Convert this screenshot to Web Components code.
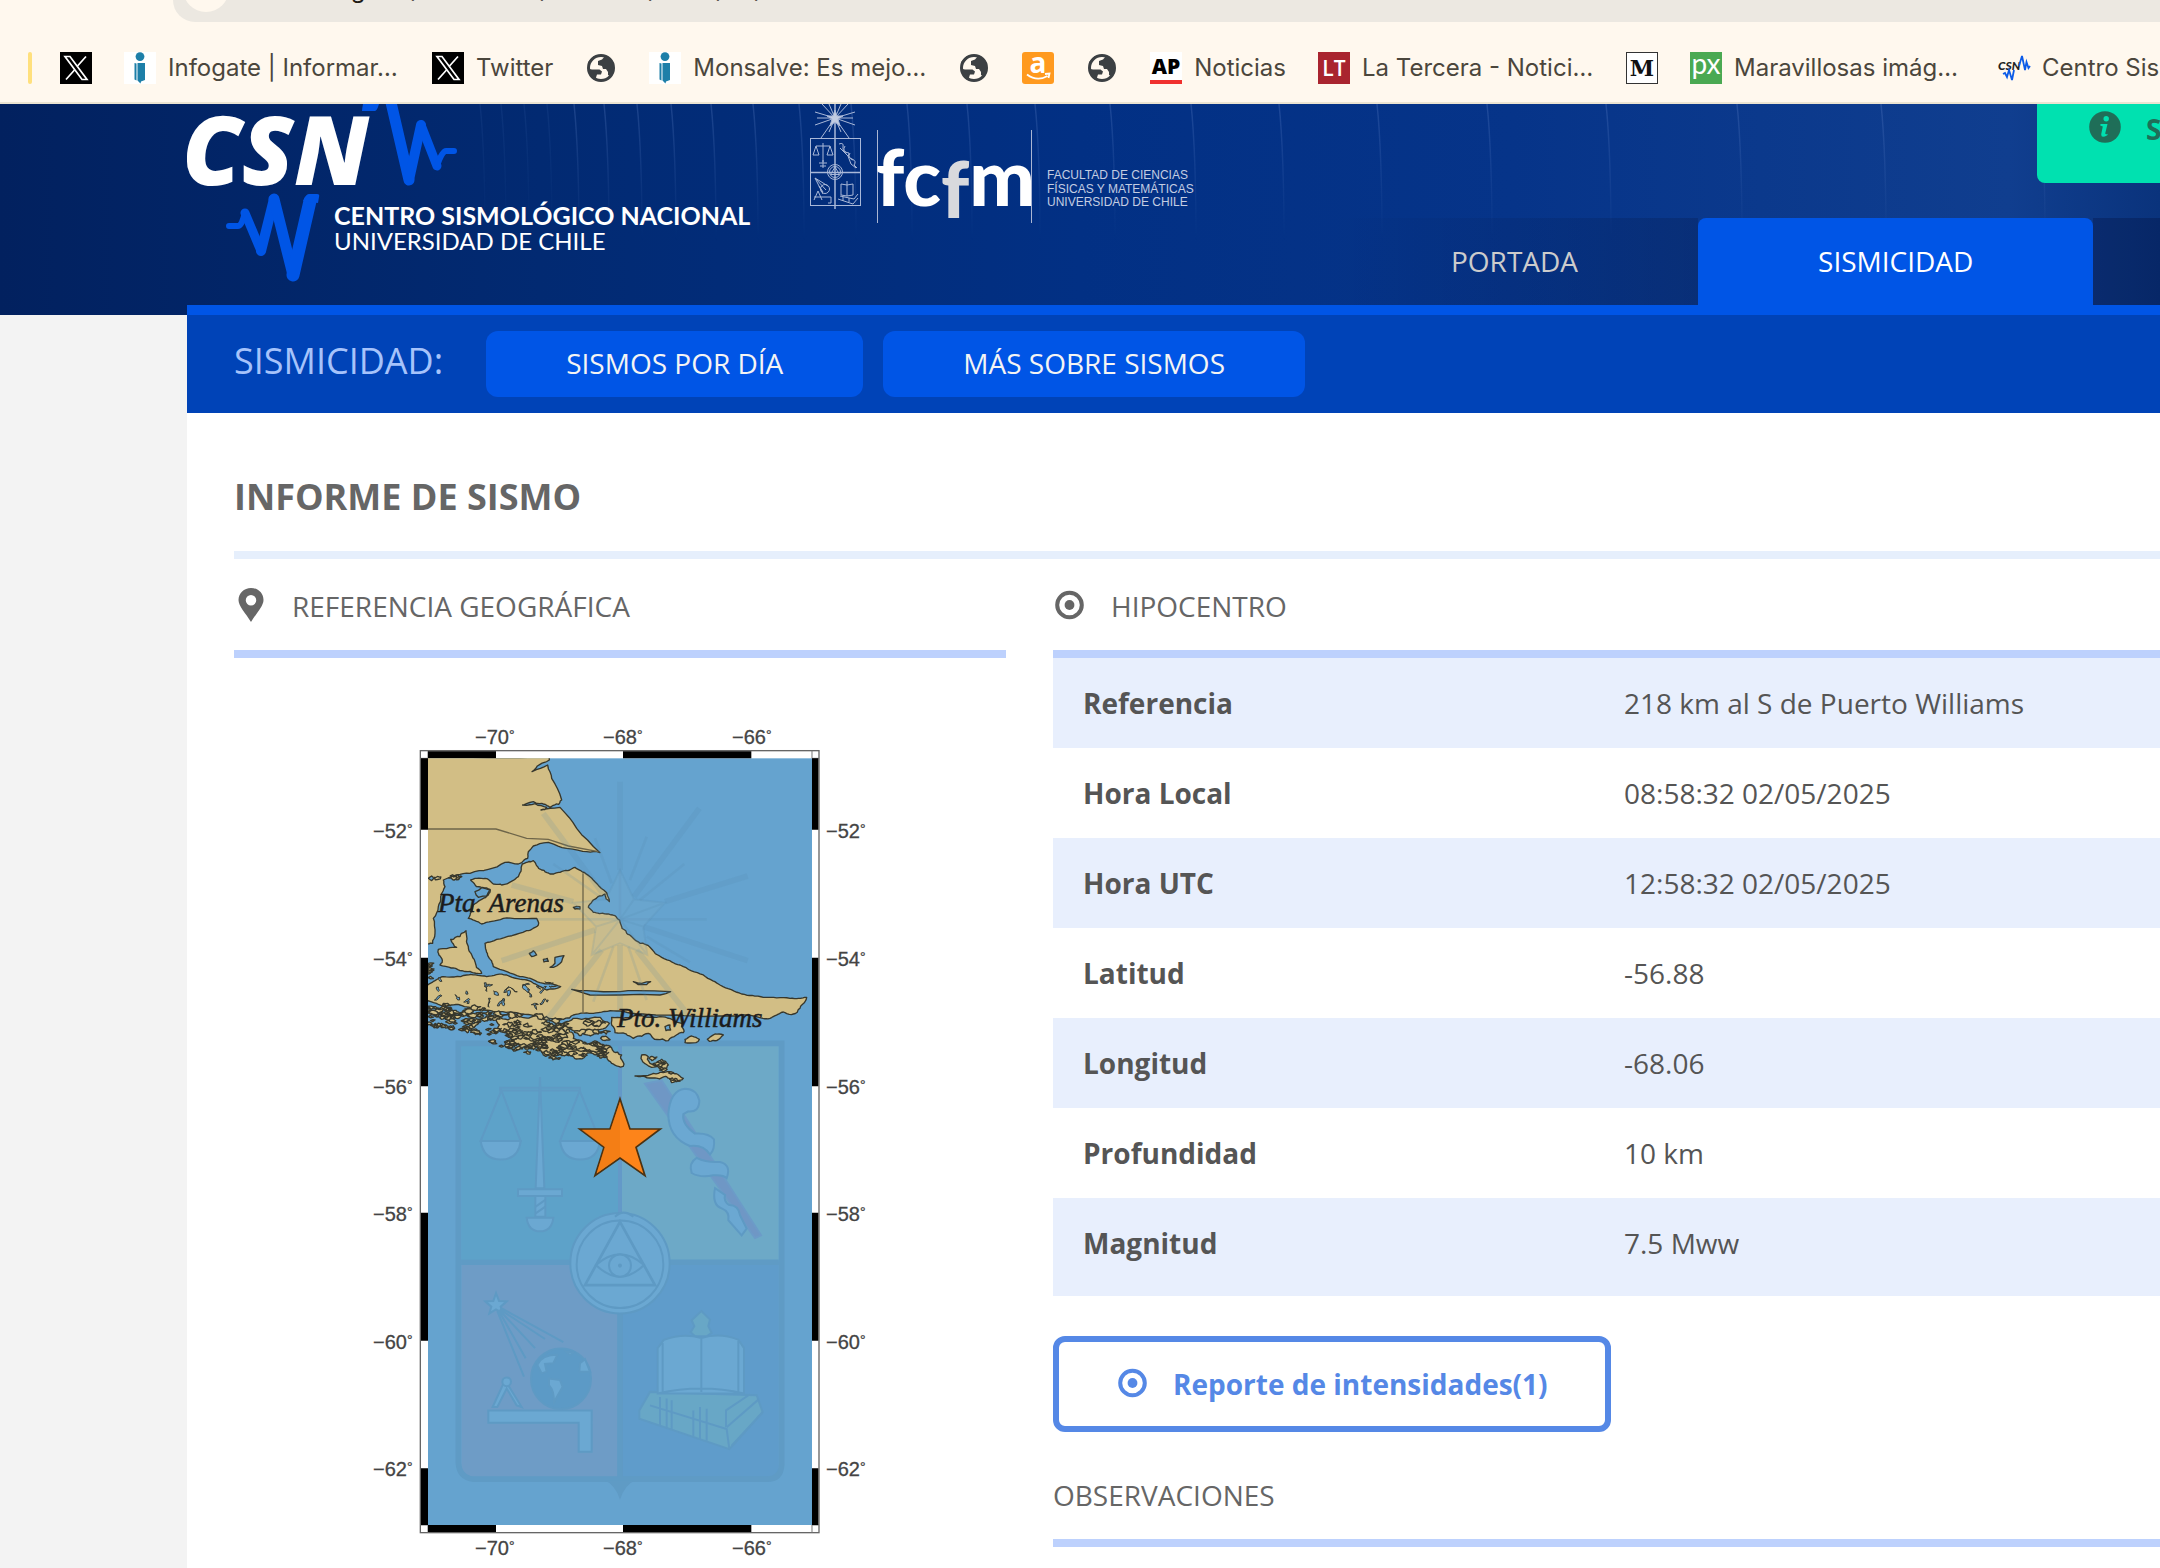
<!DOCTYPE html>
<html lang="es">
<head>
<meta charset="utf-8">
<title>Informe de sismo</title>
<style>
  html, body { margin: 0; }
  body { display: flex; flex-direction: column; min-height: 100vh; background: #f3f3f3; font-family: "Open Sans", sans-serif; font-size: 28px; line-height: 40px; color: #555; overflow-x: hidden; }
  page-panel { flex: 1; }
</style>
</head>
<body>
<browser-bar></browser-bar>
<site-header></site-header>
<page-panel>
  <sub-nav slot="nav" label="SISMICIDAD:">
    <pill-link>SISMOS POR DÍA</pill-link>
    <pill-link>MÁS SOBRE SISMOS</pill-link>
  </sub-nav>
  <span slot="title">INFORME DE SISMO</span>
  <section-heading slot="left" icon="pin">REFERENCIA GEOGRÁFICA</section-heading>
  <quake-map slot="left"></quake-map>
  <section-heading slot="right" icon="target">HIPOCENTRO</section-heading>
  <quake-data slot="right"></quake-data>
  <report-link slot="right">Reporte de intensidades(1)</report-link>
  <section-heading slot="right">OBSERVACIONES</section-heading>
</page-panel>

<script>
const define = (name, html, setup) => {
  const tpl = document.createElement('template');
  tpl.innerHTML = html;
  customElements.define(name, class extends HTMLElement {
    static observedAttributes = ['name'];
    connectedCallback() {
      if (this.shadowRoot) return;
      this.attachShadow({ mode: 'open' }).append(tpl.content.cloneNode(true));
      if (setup) setup(this, this.shadowRoot);
    }
    attributeChangedCallback() {
      if (this.shadowRoot && setup) setup(this, this.shadowRoot);
    }
  });
};

/* ---------- icons ---------- */
const person = '<rect width="32" height="32" fill="#fff"/><circle cx="16" cy="4.6" r="4.4" fill="#1d7fa8"/><path d="M10.5 11l2 .5v17l-2-1zM13.5 11h7.5v17l-4 1.5-.5 2-3-3z" fill="#1d7fa8"/>';
const icons = {
  x: '<rect width="32" height="32"/><path d="M26 4.500L17.500 14M14.500 18L6 27.500" fill="none" stroke="#fff" stroke-width="1.700"/><path d="M5 4.500h5l17 23h-5z" fill="#000" stroke="#fff" stroke-width="1.700"/>',
  info: person,
  globe: '<circle cx="16" cy="16" r="12.500" fill="#fff8ee" stroke="#3c4043" stroke-width="3"/><path d="M17 3C9 3 3.500 9 3.500 16c1 1 3 1.500 5 1.500h6l2.500 2-1 3h-4l-1 3 2 3.500-5-2-5-7V10l6-6zM20 4l-3 3.500-4 1.500v4l4 1 1 3h3l2 3v3l3 1.500c4-4 4-12 1-16z" fill="#3c4043"/>',
  amazon: '<rect width="32" height="32" rx="3" fill="#ff9a1f"/><text x="16" y="21" text-anchor="middle" font-family="Open Sans" font-weight="700" font-size="28" fill="#fff">a</text><path d="M5 22.500q10 7.500 20.500 1.500M23 22l4.500-.5-1 4.500" fill="none" stroke="#fff" stroke-width="1.800"/>',
  ap: '<rect width="32" height="32" fill="#fff"/><text x="16" y="22" text-anchor="middle" font-family="Open Sans" font-weight="800" font-size="21" fill="#000">AP</text><rect y="28" width="32" height="4" fill="#f0302e"/>',
  lt: '<rect width="32" height="32" fill="#a9242f"/><text x="16" y="24" text-anchor="middle" font-family="Open Sans" font-weight="600" font-size="21" fill="#fff">LT</text>',
  m: '<rect x=".5" y=".5" width="31" height="31" fill="#fff" stroke="#333"/><text x="16" y="24" text-anchor="middle" font-family="DejaVu Serif" font-weight="700" font-size="22" fill="#111">M</text>',
  px: '<rect width="32" height="32" fill="#4aa952"/><text x="16" y="22" text-anchor="middle" font-family="Lato" font-weight="400" font-size="28" fill="#fff">px</text>',
  csn: '<text x="0" y="18" font-family="Lato" font-style="italic" font-weight="900" font-size="12" fill="#222">CSN</text><path d="M21 14l3-10 3 14 1.500-8 2 6 1.500-2M5 22l2-1 2 4 2-7 3 10 2-10" fill="none" stroke="#0b5be8" stroke-width="1.800"/>',
  pin: '<path fill-rule="evenodd" d="M17 -2C10 -2 4.500 3 4.500 10c0 6 7 13 12.500 22 5.500-9 12.500-16 12.500-22C29.500 3 24 -2 17 -2zM17 5a5.200 5.200 0 1 1 0 10.500A5.200 5.200 0 0 1 17 5z" fill="currentColor"/>',
  target: '<circle cx="16.500" cy="15" r="12.300" fill="none" stroke="currentColor" stroke-width="4"/><circle cx="16.500" cy="15" r="4.900" fill="currentColor"/>',
  i: '<circle cx="16" cy="16" r="15.800" fill="#1f6e58"/><circle cx="17.200" cy="7.800" r="2.700" fill="#00e1b0"/><path d="M11.500 13h7l-2.300 9.500q.5 1.500 2.500.2l-.4 1.600q-6.300 3.500-6.100-1l1.600-7.800-2.600-1z" fill="#00e1b0"/>'
};
define('app-icon', `<style>:host{display:block;flex:none;width:32px;height:32px}svg{display:block;width:100%;height:100%;overflow:visible}</style><svg viewBox="0 0 32 32" aria-hidden="true"></svg>`,
  (el, r) => { r.querySelector('svg').innerHTML = icons[el.getAttribute('name')] || ''; });

/* ---------- browser chrome ---------- */
define('book-mark', `<style>
  :host{display:block;flex:none}
  a{display:flex;align-items:center;gap:12px;color:#4b463c;text-decoration:none;white-space:nowrap}
  .label{display:block}
  :host([elided]) .label{min-width:232px}
  :host([bare]) .label{display:none}
</style><a href="#"><app-icon></app-icon><span class="label"><slot></slot></span></a>`,
  (el, r) => r.querySelector('app-icon').setAttribute('name', el.getAttribute('icon')));

define('browser-bar', `<style>
  :host{display:block;background:#fff8ee;border-bottom:2px solid #ebe4d2;overflow:hidden;font-family:Inter,sans-serif}
  .omni{display:flex;align-items:flex-end;gap:35px;height:22px;margin-left:173px;background:#ece8e1;border-radius:0 0 0 36px}
  .chip{flex:none;width:46px;height:46px;margin:0 0 10px 10px;border-radius:50%;background:#fff8ee}
  .url{font-size:24px;line-height:32px;margin-bottom:16px;color:#5b564e;white-space:nowrap}
  .url b{font-weight:400;color:#1f1b16}
  nav{display:flex;align-items:center;gap:32px;height:80px;padding:11px 0 0 28px;font-size:24px;line-height:32px;box-sizing:border-box}
  .sep{flex:none;width:4px;height:32px;border-radius:2px;background:#ffe07d;margin-right:-4px}
</style>
<div class="omni"><span class="chip"></span><span class="url"><b>sismologia.cl</b>/sismicidad/informes/2025/05/307180.html</span></div>
<nav aria-label="Marcadores"><span class="sep"></span>
<book-mark bare icon="x"></book-mark>
<book-mark elided icon="info">Infogate | Informar…</book-mark>
<book-mark icon="x">Twitter</book-mark>
<book-mark bare icon="globe"></book-mark>
<book-mark elided icon="info">Monsalve: Es mejo…</book-mark>
<book-mark bare icon="globe"></book-mark>
<book-mark bare icon="amazon"></book-mark>
<book-mark bare icon="globe"></book-mark>
<book-mark icon="ap">Noticias</book-mark>
<book-mark elided icon="lt">La Tercera - Notici…</book-mark>
<book-mark bare icon="m"></book-mark>
<book-mark elided icon="px">Maravillosas imág…</book-mark>
<book-mark icon="csn">Centro Sis</book-mark>
</nav>`);

/* ---------- header ---------- */
define('csn-logo', `<style>:host{display:block;flex:none}svg{display:block}</style>
<svg width="580" height="201" viewBox="187 104 580 201" role="img" aria-label="Centro Sismológico Nacional">
 <g fill="none" stroke="#0055e6" stroke-linejoin="round" stroke-linecap="round">
  <path d="M390 98L409 180" stroke-width="11"/><path d="M409 180L421 125" stroke-width="10"/><path d="M421 125L437 166" stroke-width="9"/><path d="M437 166Q442 151 446 151H454" stroke-width="6"/>
  <path d="M229 226H238Q242 226 245 212" stroke-width="6"/><path d="M245 213L261 251" stroke-width="9"/><path d="M261 251L274 199" stroke-width="10"/><path d="M274 199L293 275" stroke-width="11"/><path d="M293 275L310 201" stroke-width="13"/>
 </g>
 <path d="M303 201l3-5q1-2 3-2h8q3 0 2 3l-1 6zM362 111q0-2 1-7h16q-2 7-4 7z" fill="#0055e6"/>
 <text x="182" y="185" font-family="Open Sans" font-size="95" font-weight="800" font-style="italic" fill="#fff">CSN</text>
 <g font-family="Lato" fill="#fff"><text x="334" y="225" font-size="25" font-weight="700">CENTRO SISMOLÓGICO NACIONAL</text>
 <text x="334" y="250" font-size="24">UNIVERSIDAD DE CHILE</text></g>
</svg>`);

define('fcfm-logo', `<style>:host{display:block;flex:none}svg{display:block}</style>
<svg width="400" height="201" viewBox="800 104 400 201" role="img" aria-label="Facultad de Ciencias Físicas y Matemáticas">
 <g fill="none" stroke="#a9b8d8" stroke-width="1">
  <rect x="810.500" y="138.500" width="50" height="67"/><path d="M835 104V209M810 172.500H861" stroke-width="1.500"/>
  <path d="M835 118L815 112M835 118L855 112M835 118L815 125M835 118L855 125M835 118L822 104M835 118L848 104M835 118L821 138M835 118L849 138M835 118L817 118M835 118H853M835 118L829 104M835 118L841 104M835 118L829 132M835 118L841 132"/>
  <path d="M835 110l2 6h6l-5 3 2 7-5-4-5 4 2-7-5-3h6z" fill="#c3cde2"/>
  <path d="M816 146H830M823 143V162M816 146l-3 9h6zM830 146l-3 9h6zM819 163h8M823 160v8M820 166h6"/>
  <path d="M839 144q5-2 4 3t6 6q-2 4 3 6t2 6l3 3M840 148l8 8 3 8 5 4M845 146q-3 5 2 7M850 153q-3 5 3 7"/>
  <circle cx="835" cy="172" r="7.500"/><circle cx="835" cy="172" r="5.500"/><path d="M835 167l4.500 7.500h-9zM833 172.500h4"/>
  <path d="M815 178l8 16M815 178l13 8M815 178l11 12M814 200l4-9 4 9M814 197h17v6h-3M819 186l4 6"/><circle cx="825" cy="189" r="4.500"/>
  <path d="M841 184l6 1 6-1v11l-6 1-6-1zM847 181v15M840 196l14 3 4-5M838 199l15 5 5-6M843 197v4M849 198v4"/>
 </g>
 <path d="M877.500 130V223M1031.500 130V223" stroke="#aab6d3"/>
 <text x="876" y="206" font-family="Lato" font-weight="900" font-size="78" fill="#fff">fc<tspan fill="#d8d9dd" dy="12">f</tspan><tspan dy="-12">m</tspan></text>
 <g font-family="Liberation Sans" font-size="12" fill="#c3cde2"><text x="1047" y="179">FACULTAD DE CIENCIAS</text><text x="1047" y="193">FÍSICAS Y MATEMÁTICAS</text><text x="1047" y="206">UNIVERSIDAD DE CHILE</text></g>
</svg>`);

define('site-tab', `<style>
  :host{display:block;flex:none}
  a{display:flex;align-items:center;height:87px;box-sizing:border-box;padding:0 120px 2px;background:linear-gradient(90deg,rgba(0,0,20,0),rgba(0,0,20,.16));color:#ccc;text-decoration:none;white-space:nowrap}
  :host([active]) a{background:#0055e6;color:#fff;border-radius:8px 8px 0 0}
  :host([rest]){flex:1}:host([rest]) a{background:rgba(0,0,30,.22);padding:0}
</style><a href="#"><slot></slot></a>`);

define('site-header', `<style>
  :host{display:block;position:relative;background:linear-gradient(90deg,#02215f 0,#022a72 25%,#023084 50%,#063489 70%,#103e8f 93%,#0a337c 100%);overflow:hidden}
  .waves{position:absolute;inset:0;width:100%;height:100%}
  .row{position:relative;display:flex;height:201px;margin-left:187px}
  .brand{display:flex;gap:33px;flex:1 1 0;min-width:0}
  .side{flex:none;width:829px;display:flex;flex-direction:column;justify-content:space-between}
  .tabs{display:flex}
  .badge{align-self:flex-end;box-sizing:border-box;width:123px;height:79px;overflow:hidden;display:flex;align-items:flex-start;gap:25px;padding:7px 0 0 52px;background:#00e1b0;border-radius:0 0 0 8px;color:#1f6e58;font-weight:700;line-height:36px;text-decoration:none}
  .strip{position:relative;height:10px;margin-left:187px;background:#0055e6}
</style>
<svg class="waves" viewBox="0 104 2160 211" preserveAspectRatio="none" aria-hidden="true">
 <defs><linearGradient id="f" x1="0" y1="0" x2="0" y2="1"><stop offset="0" stop-color="#fff"/><stop offset=".65" stop-color="#000"/></linearGradient><mask id="k" maskUnits="userSpaceOnUse" x="0" y="104" width="2160" height="211"><rect y="104" width="2160" height="211" fill="url(#f)"/></mask></defs>
 <g mask="url(#k)" fill="none" stroke="#6f93d6" stroke-width="1.500"></g></svg>
<div class="row"><div class="brand"><csn-logo></csn-logo><fcfm-logo></fcfm-logo></div>
<div class="side"><a class="badge" href="#"><app-icon name="i"></app-icon><span>S</span></a>
<nav class="tabs"><site-tab>PORTADA</site-tab><site-tab active>SISMICIDAD</site-tab><site-tab rest></site-tab></nav></div></div>
<div class="strip"></div>`, (el, r) => {
  r.querySelector('.waves g').innerHTML = [480,501,524,547,574,604,637,671,711,753,799,851,907,967,1035,1110,1191,1279,1377,1487,1606,1737,1881,2040]
    .map(x => `<path stroke-opacity="${x < 560 ? .1 : .24}" d="M${x} 104Q${x + 6} 160 ${x + 5} 290"/>`).join('');
});

/* ---------- content ---------- */
define('pill-link', `<style>:host{display:block;flex:none}a{display:flex;align-items:center;height:66px;box-sizing:border-box;padding:0 80px 2px;border-radius:12px;background:#0055e6;color:#f4f4f4;text-decoration:none;white-space:nowrap}</style><a href="#"><slot></slot></a>`);

define('sub-nav', `<style>
  :host{display:block;background:#0043b7}
  nav{display:flex;align-items:center;gap:20px;height:98px;padding-left:47px}
  .label{font-size:36px;line-height:48px;color:#a6c3fb;padding:0 23px 6px 0}
</style><nav><span class="label"></span><slot></slot></nav>`, (el, r) => r.querySelector('.label').textContent = el.getAttribute('label'));

define('page-panel', `<style>
  :host{display:block;margin-left:187px;background:#fff}
  h1{margin:0 0 0 47px;padding:60px 0 30px;font-size:36px;line-height:48px;font-weight:700;color:#666;border-bottom:8px solid #e6effc}
  .cols{display:grid;grid-template-columns:minmax(0,772fr) minmax(0,1107fr);gap:47px;padding-left:47px}
</style><slot name="nav"></slot><h1><slot name="title"></slot></h1><div class="cols"><div><slot name="left"></slot></div><div><slot name="right"></slot></div></div>`);

define('section-heading', `<style>
  :host{display:block}
  h2{display:flex;align-items:center;gap:26px;margin:0;padding:27px 0 24px;font-size:28px;line-height:40px;font-weight:400;color:#666;border-bottom:8px solid #bdd1fd}
</style><h2><slot></slot></h2>`, (el, r) => {
  const n = el.getAttribute('icon');
  if (n) { const i = document.createElement('app-icon'); i.setAttribute('name', n); r.querySelector('h2').prepend(i); }
});

define('quake-data', `<style>
  :host{display:block;background:#e8effd;padding-bottom:8px}
  table{width:100%;border-collapse:collapse;table-layout:fixed}
  th,td{height:90px;padding:0 0 0 30px;text-align:left;box-sizing:border-box;line-height:40px}
  th{width:541px;font-weight:700}
  tr:nth-child(even){background:#fff}
</style><table><tbody></tbody></table>`, (el, r) => {
  r.querySelector('tbody').innerHTML = [['Referencia','218 km al S de Puerto Williams'],['Hora Local','08:58:32 02/05/2025'],['Hora UTC','12:58:32 02/05/2025'],['Latitud','-56.88'],['Longitud','-68.06'],['Profundidad','10 km'],['Magnitud','7.5 Mww']]
    .map(([a, b]) => `<tr><th scope="row">${a}</th><td>${b}</td></tr>`).join('');
});

define('report-link', `<style>
  :host{display:block;padding:40px 0 16px}
  a{display:inline-flex;vertical-align:top;align-items:center;gap:25px;box-sizing:border-box;height:96px;padding:0 57px;border:6px solid #5588e6;border-radius:12px;color:#5588e6;font-weight:700;text-decoration:none}
</style><a href="#"><app-icon name="target"></app-icon><slot></slot></a>`);

/* ---------- map ---------- */
let seed = 7;
const rnd = () => (seed = (seed * 16807) % 2147483647) / 2147483647 - .5;
/* subdivides a coast line and nudges the new points */
const rough = (pts, amp, depth) => {
  for (let d = 0; d < depth; d++, amp /= 2) {
    const out = [];
    pts.forEach((p, i) => {
      const q = pts[(i + 1) % pts.length];
      out.push(p);
      const len = Math.hypot(q[0] - p[0], q[1] - p[1]);
      if (len > 9) { const k = Math.min(amp, len * .6); out.push([(p[0] + q[0]) / 2 + rnd() * k, (p[1] + q[1]) / 2 + rnd() * k]); }
    });
    pts = out;
  }
  return 'M' + pts.map(p => p.map(v => v.toFixed(1)).join(' ')).join('L') + 'Z';
};
const P = s => s.trim().split(/\s+/).map(p => p.split(',').map(Number));
const land = [
  ['204,140 570,140 568,150 540,163 516,185 563,165 575,205 605,270 596,283 570,292 550,282 520,275 488,285 525,281 560,292 543,300 600,292 650,355 720,428 680,425 620,415 565,397 520,408 505,425 503,445 475,462 435,457 385,478 330,490 290,495 250,510 255,530 242,560 235,590 220,625 225,670 218,700 190,705 190,140', 7, 2],
  ['520,452 545,480 570,492 600,487 645,472 690,500 740,548 748,575 735,552 700,570 685,592 700,607 740,612 765,617 785,650 800,670 840,700 870,712 905,742 960,765 1030,795 1080,825 1145,852 1210,862 1290,865 1340,862 1320,895 1300,912 1270,906 1230,925 1180,918 1120,918 950,915 850,912 770,903 700,910 640,915 610,928 540,920 470,908 400,905 350,900 300,885 250,890 190,870 190,830 225,812 250,800 320,795 380,800 440,795 500,810 560,840 602,830 540,818 480,800 400,770 385,740 375,700 410,688 500,662 535,645 530,625 430,625 365,642 325,625 340,585 385,555 390,538 350,530 332,510 375,505 400,522 425,525 475,500 487,462', 8, 3],
  ['318,662 325,710 345,755 365,790 300,782 240,765 245,745 235,718 290,712 272,688 300,680', 12, 3],
  ['755,922 830,915 900,920 965,940 970,968 925,992 880,985 865,970 820,985 765,968', 14, 3],
  ['410,920 460,912 540,918 560,940 620,950 640,985 700,995 750,1010 785,1035 792,1062 778,1070 740,1040 700,1025 640,1040 590,1030 550,1035 500,1010 470,1000 440,965 415,950', 32, 4],
  ['590,945 640,925 720,922 748,940 700,962 640,962', 14, 3],
  ['975,988 995,978 1018,988 1008,998 975,998', 4, 2],
  ['1042,988 1065,972 1090,975 1070,992 1048,994', 4, 2],
  ['845,1035 865,1040 870,1060 905,1048 925,1065 905,1080 870,1070 848,1055', 14, 3],
  ['825,1098 880,1090 930,1085 970,1105 935,1118 920,1100 870,1104', 12, 3]
];
const lakes = ['205,505 215,498 225,502 215,512', '345,545 365,533 390,540 380,558 355,562', '508,730 520,722 530,735 515,740', '570,772 585,760 585,742 612,737 605,755 590,768', '635,838 680,842 780,845 830,842 932,845 900,855 780,855 690,855', '820,815 845,820 872,815 860,824 835,824', '640,592 660,590 660,597 645,597', '915,950 930,945 932,960 918,962', '550,748 562,745 565,754 552,756'];
const ticks = [[359, '52'], [743, '54'], [1129, '56'], [1508, '58'], [1892, '60'], [2275, '62']];

define('quake-map', `<style>
  :host{display:flex;justify-content:center;padding-top:52px}
  svg{display:block;flex:none}
  text{font-family:"Liberation Sans",sans-serif;font-size:20px;fill:#444;stroke:#444;stroke-width:.3}
  .deg{font-size:14px}
  .place{font-family:"Liberation Serif",serif;font-style:italic;font-size:27px;fill:#1c1c1c;stroke:#1c1c1c;stroke-width:.5}
</style>
<svg width="520" height="856" viewBox="0 0 520 856" role="img" aria-label="Mapa de la zona del sismo">
 <defs><clipPath id="sea"><rect x="204" y="145" width="1152" height="2300"/></clipPath></defs>
 <g transform="scale(.33333)">
  <rect x="181" y="122" width="1196" height="2346" fill="#fff" stroke="#666" stroke-width="4"/>
  <rect x="204" y="145" width="1152" height="2300" fill="#65a3cf"/>
  <path d="M204 122V145H181M1356 122V145H1377M204 2468V2445H181M1356 2468V2445H1377" stroke="#777" stroke-width="3" fill="none"/>
  <path d="M204 124H408V145H204ZM789 124H1174V145H789ZM204 2445H408V2466H204ZM789 2445H1174V2466H789Z"/>
  <path class="side"/>
  <g transform="translate(0 990) scale(1 1.0102)">
   <g fill-opacity=".75">
    <rect x="304" y="18" width="476" height="640" fill="#5ba1c7"/><rect x="780" y="18" width="476" height="640" fill="#70abc4"/>
    <path d="M304 658H780V1300H335Q304 1295 304 1270Z" fill="#7199c3"/><path d="M780 658H1256V1270Q1256 1300 1225 1300H780Z" fill="#5d99c9"/>
   </g>
   <path d="M295 10H1265V1262Q1262 1304 1222 1304H340Q298 1300 295 1255ZM304 660H1256M780 800V1304" fill="none" stroke="#5f9bc5" stroke-width="17"/>
   <path d="M780 18V520" stroke="#6499c8" stroke-width="12"/>
   <path d="M735 1308Q765 1320 780 1365Q795 1320 825 1308Z" fill="#5f9bc5"/>
   <g stroke="#5e9ac4" stroke-width="6" fill="#6ba8d2">
    <path d="M420 142H660V150H420ZM424 150L362 300H482ZM659 150L600 300H720Z" fill="none"/>
    <path d="M362 300H482Q475 355 422 355Q370 355 362 300ZM600 300H720Q713 355 660 355Q608 355 600 300ZM540 110L553 440H527ZM474 443H606V463H474ZM526 463H556V525H526ZM500 528H580Q575 568 540 568Q505 568 500 528Z"/>
    <path d="M527 495L556 475M527 515L556 495" fill="none"/>
    <path d="M855 130L905 120L1203 580L1185 588Z" fill="#6f97c5" stroke="#6c9bc8"/>
    <path d="M985 212Q1018 215 1018 180Q1010 145 975 145Q930 150 925 220Q925 290 990 315Q1030 310 1050 340Q1065 325 1062 295Q1045 275 1005 278Q965 250 970 220ZM1010 350Q985 365 995 395Q1020 410 1060 402Q1090 400 1100 410Q1115 370 1080 362Q1040 365 1010 350ZM1065 440Q1055 490 1085 500Q1110 510 1105 535L1145 580L1160 560L1140 520Q1135 490 1108 490Q1090 480 1095 460Z"/>
    <circle cx="780" cy="663" r="149"/><circle cx="780" cy="666" r="130"/>
    <path d="M780 540L885 728H675ZM675 728H885" fill="none" stroke-width="8"/>
    <path d="M708 668Q780 605 852 668Q780 738 708 668Z"/><circle cx="780" cy="670" r="33"/><circle cx="780" cy="670" r="3"/><path d="M765 525Q790 500 820 525"/>
    <path d="M408 752L417 775L440 776L422 792L428 812L408 800L388 812L394 792L376 776L400 775Z"/>
    <path d="M412 805L492 1000M415 802L497 945M418 802L525 915M420 800L555 888M425 797L610 897" fill="none"/>
    <circle cx="603" cy="1006" r="90" fill="#5c9ac6"/>
    <path d="M532 965Q545 935 592 935L580 960L555 962L560 985L545 990ZM567 1005L600 1010L608 1030L582 1075Q582 1040 567 1025ZM660 960L675 948L690 985H658ZM618 925L640 928L630 936Z"/>
    <path d="M385 1100H695V1223H656V1137H385ZM398 1090L435 1010L485 1090L470 1085L440 1035L412 1090Z"/><circle cx="440" cy="1015" r="13"/>
    <path d="M1024 805L1050 830L1045 850L1055 870L1040 880H1005L992 868L1003 850L995 832Z" fill="#68a7c6"/>
    <path d="M838 1100L870 1045L1190 1055L1208 1105L1108 1215L838 1125Z" fill="#68a7c6"/><path d="M1195 1068L1100 1150M870 1085L1100 1155L1108 1215M1098 1150V1100L1170 1052M1208 1105L1115 1205M900 1060V1145M920 1065V1150M935 1070V1155M1000 1100V1180M1020 1090V1185M1040 1095V1190" fill="none"/>
    <path d="M893 915L912 890Q970 870 1024 885Q1080 868 1135 890L1152 915V1050H893ZM1024 885V1045M908 900V1045M1135 893V1045M893 1050Q1024 1020 1152 1050"/>
   </g>
  </g>
  <g clip-path="url(#sea)">
   <g class="land" fill="#d2be85" stroke="#37372c" stroke-width="4" stroke-linejoin="round"></g>
   <path d="M204 357H408L500 385L565 388L625 408L715 425M669 490V912" fill="none" stroke="#6e6549" stroke-width="4"/>
  </g>
  <g stroke="#4e83a8" stroke-opacity=".15" fill="none">
   <path stroke-width="17" d="M780 480V215M822 560L1018 295M915 575L1163 498M850 650L1163 752M735 560L550 310M640 575L455 525M705 660L425 752M780 705V900M830 720L985 915M725 720L560 930"/>
   <path stroke-width="8" d="M810 510L860 380M840 570L973 462M780 628H1040M860 680L990 757M755 520L705 385M720 560L580 462M780 628H530M760 710L700 875M805 710L860 870M780 628V480"/>
   <path stroke-width="6" fill="#8fb8d0" fill-opacity=".12" d="M780 480L822 568L915 578L850 650L862 735L780 700L695 735L708 650L640 578L738 568ZM780 628L822 568M780 628L915 578M780 628L850 650M780 628L862 735M780 628L695 735M780 628L708 650"/>
  </g>
  <path d="M0 -134L30 -43H121L48 12L75 97L0 44L-75 97L-48 12L-121 -43H-30Z" transform="translate(780 1300)" fill="#fd841a" stroke="#4b3212" stroke-width="5"/>
  <path d="M780 1175V1340L710 1390L734 1311L665 1260H751Z" fill="#ef7a12" fill-opacity=".6"/>
 </g>
 <g class="labels"></g>
 <text class="place" x="78" y="202">Pta. Arenas</text>
 <text class="place" x="257" y="317">Pto. Williams</text>
</svg>`, (el, r) => {
  let s = land.map(([p, a, d]) => `<path d="${rough(P(p), a, d)}"/>`).join('');
  s += lakes.map(p => `<path fill="#65a3cf" d="${rough(P(p), 4, 1)}"/>`).join('');
  /* fjords cut into the western end */
  for (let i = 0; i < 30; i++) {
    const x = 215 + (rnd() + .5) * 370, y = 812 + (rnd() + .5) * 80, a = rnd() * 40, b = rnd() * 50;
    s += `<path fill="#65a3cf" stroke-width="3" d="${rough([[x, y], [x + a, y + b], [x + a + 3, y + b + 3], [x + 6, y]], 14, 2)}"/>`;
  }
  /* archipelago: small islets in a band along the Pacific side */
  const islets = (n, x0, x1, yAt, spread, size) => {
    for (let i = 0; i < n; i++) {
      const t = rnd() + .5, x = x0 + (x1 - x0) * t, y = yAt(t) + rnd() * spread, w = size * (.5 + Math.abs(rnd()) * 1.600), h = w * .45;
      s += `<path d="${rough([[x - w, y], [x, y - h], [x + w, y + rnd() * h * 2], [x, y + h]], 18, 3)}"/>`;
    }
  };
  islets(60, 206, 360, t => 915 + t * 25, 60, 11);
  islets(24, 206, 420, t => 895 + t * 20, 30, 13);
  islets(80, 385, 600, t => 970 + t * 50, 60, 11);
  islets(36, 430, 740, t => 935 + t * 30, 55, 16);
  islets(40, 590, 740, t => 1010 + t * 10, 45, 12);
  islets(9, 204, 220, () => 780, 50, 8);
  islets(10, 870, 960, t => 1060 + t * 40, 40, 10);
  islets(5, 225, 320, () => 505, 16, 10);
  r.querySelector('.land').innerHTML = s;
  r.querySelector('.side').setAttribute('d', [[145, 359], [743, 1129], [1508, 1892], [2275, 2445]].map(([a, b]) => `M183 ${a}H204V${b}H183ZM1356 ${a}H1375V${b}H1356Z`).join(''));
  const lab = (x, y, t) => `<text x="${x}" y="${y}">−${t}<tspan class="deg" dy="-4">°</tspan></text>`;
  r.querySelector('.labels').innerHTML =
    [[115, '70'], [243, '68'], [372, '66']].map(([x, t]) => lab(x, 34, t) + lab(x, 845, t)).join('') +
    ticks.map(([y, t]) => lab(13, Math.round(y / 3) + 8, t) + lab(466, Math.round(y / 3) + 8, t)).join('');
});
</script>
</body>
</html>
